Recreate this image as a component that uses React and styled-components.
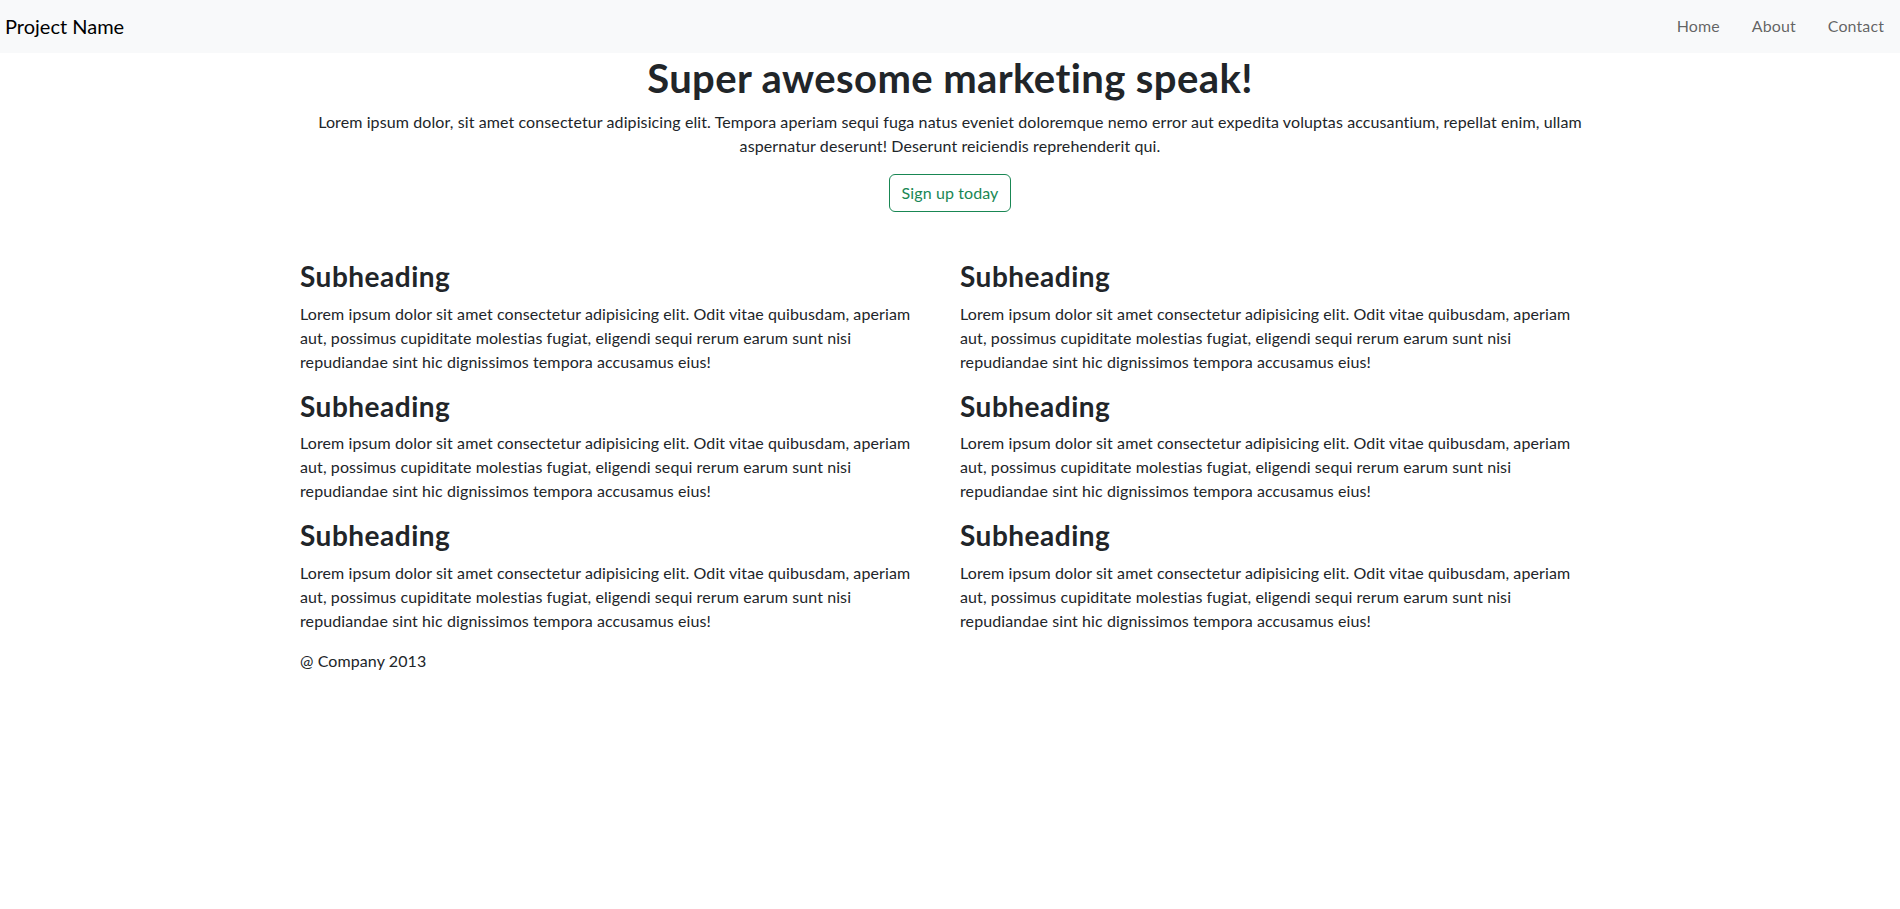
import React from 'react'
import styled, { createGlobalStyle } from 'styled-components'

const GlobalStyle = createGlobalStyle`
    *{
        box-sizing:border-box;
    }
    body{
        margin:0;
        font-family:Lato, "Noto Sans", sans-serif;
        font-size:16px;
        line-height:1.5;
        letter-spacing:0.1px;
        color:#212529;
        background:#fff;
    }
`

const items = [1, 2, 3, 4, 5, 6]
const lorem = 'Lorem ipsum dolor sit amet consectetur adipisicing elit. Odit vitae quibusdam, aperiam aut, possimus cupiditate molestias fugiat, eligendi sequi rerum earum sunt nisi repudiandae sint hic dignissimos tempora accusamus eius!'

function App() {
    return (
        <div>
            <GlobalStyle />
            <Navbar>
                <Brand href="#">Project Name</Brand>
                <NavList>
                    <NavLink href="#">Home</NavLink>
                    <NavLink href="#">About</NavLink>
                    <NavLink href="#">Contact</NavLink>
                </NavList>
            </Navbar>
            <Container>
                <Hero>
                    <Title>Super awesome marketing speak!</Title>
                    <Lead>
                        Lorem ipsum dolor, sit amet consectetur adipisicing elit. Tempora aperiam sequi fuga natus eveniet doloremque nemo error aut expedita voluptas accusantium, repellat enim, ullam aspernatur deserunt! Deserunt reiciendis reprehenderit qui.
                    </Lead>
                    <SignUp href="#">Sign up today</SignUp>
                </Hero>
                <Grid>
                    {items.map(i => (
                        <Feature key={i}>
                            <Subheading>Subheading</Subheading>
                            <Text>{lorem}</Text>
                        </Feature>
                    ))}
                </Grid>
                <Footer>@ Company 2013</Footer>
            </Container>
        </div>
    )
}

export default App

const Navbar = styled.nav`
    height:53px;
    background:#f8f9fa;
    display:flex;
    align-items:center;
    justify-content:space-between;
    padding:0 0 2px 5px;
`

const Brand = styled.a`
    font-size:20px;
    letter-spacing:0;
    color:#000;
    text-decoration:none;
`

const NavList = styled.div`
    display:flex;
`

const NavLink = styled.a`
    padding:8px 16px;
    color:rgba(0,0,0,0.62);
    text-decoration:none;
`

const Container = styled.div`
    width:1320px;
    margin:0 auto;
    padding:0 10px;
`

const Hero = styled.div`
    display:flex;
    flex-direction:column;
    align-items:center;
    text-align:center;
    margin-bottom:48px;
`

const Title = styled.h1`
    font-size:40px;
    font-weight:700;
    line-height:1.2;
    letter-spacing:0.4px;
    margin:1px 0 8px;
`

const Lead = styled.p`
    margin:0 0 16px;
`

const SignUp = styled.a`
    display:inline-block;
    padding:6px 12px;
    border:1px solid #198754;
    border-radius:6px;
    color:#198754;
    text-decoration:none;
    line-height:1.5;
`

const Grid = styled.div`
    display:grid;
    grid-template-columns:1fr 1fr;
    column-gap:20px;
`

const Feature = styled.div`
`

const Subheading = styled.h3`
    font-size:28px;
    font-weight:700;
    line-height:1.2;
    letter-spacing:0.5px;
    margin:0 0 8px;
`

const Text = styled.p`
    margin:0 0 16px;
`

const Footer = styled.footer`
`
